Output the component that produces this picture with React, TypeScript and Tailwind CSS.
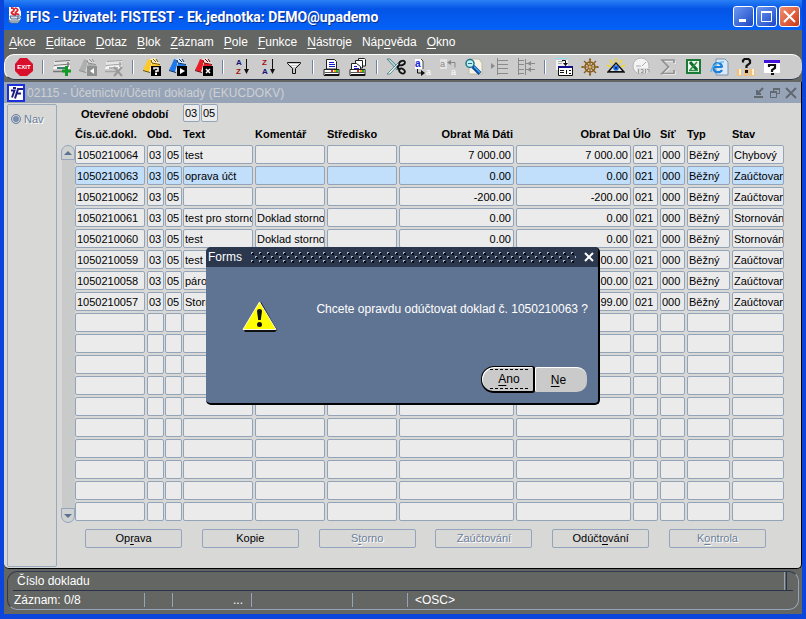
import type { ReactNode } from "react";

type IconProps = { children: ReactNode };

function Glyph({ children }: IconProps) {
  return (
    <svg width="20" height="20" viewBox="0 0 20 20" aria-hidden="true">
      {children}
    </svg>
  );
}

function RowShape({ top, mid }: { top: string; mid: string }) {
  return (
    <>
      <path d="M3 4h15v4H2V5z" fill="#e6e6e4" />
      <path d="M3 4.5L18 3.5M2 8.5L18 7" stroke={top} strokeWidth="1" fill="none" />
      <path d="M1 11l2-2 15-1v4H1z" fill="#f4f4f4" />
      <path d="M5 11h9" stroke={mid} strokeWidth="2" />
      <path d="M1 14.5h12M16 5v5" stroke={top} strokeWidth="1.5" fill="none" />
    </>
  );
}

function Folder({ fill, dark, page }: { fill: string; dark: string; page: string }) {
  return (
    <>
      <path d="M8 2l5-1 3 4 2 1-2 5-9 4-2-2z" fill={page} />
      <path d="M6 2l3 1v5l-2 7-6-2 3-6z" fill={fill} />
      <path d="M10 6l8 2-1 2H9z" fill={fill} />
      <path d="M1 13.5l7 2M9 3l1 3 8 1.500" stroke={dark} fill="none" />
      <path d="M11 2l3 3M14 2l2 3" stroke={dark} fill="none" />
    </>
  );
}

function Badge({ fill, children }: { fill: string; children: ReactNode }) {
  return (
    <>
      <rect x="9" y="9" width="10" height="10" fill={fill} />
      {children}
    </>
  );
}

function Printer() {
  return (
    <>
      <path d="M2 12.5h15v6H2z" fill="#fff" stroke="#222" />
      <path d="M2.500 15.500h14" stroke="#555" />
      <path d="M3 18h14" stroke="#111" strokeWidth="2" />
      <path d="M9 14h2" stroke="#e22" strokeWidth="2" />
      <path d="M12 14h2" stroke="#ea0" strokeWidth="2" />
      <path d="M14 14h2" stroke="#2b2" strokeWidth="2" />
    </>
  );
}

function SortIcon({ a, b, ca, cb }: { a: string; b: string; ca: string; cb: string }) {
  return (
    <Glyph>
      <text x="4" y="8" fontSize="8" fontWeight="bold" fontFamily="'Liberation Sans', sans-serif" fill={ca}>{a}</text>
      <text x="4" y="17" fontSize="8" fontWeight="bold" fontFamily="'Liberation Sans', sans-serif" fill={cb}>{b}</text>
      <path d="M14.500 2v12" stroke="#111" />
      <path d="M12 12h5l-2.500 5z" fill="#111" />
    </Glyph>
  );
}

type Tool = { name: string; icon: ReactNode };

const toolGroups: Tool[][] = [
  [
    {
      name: "Konec",
      icon: (
        <Glyph>
          <path d="M6 1h7l6 6v7l-6 5H6l-5-5V7z" fill="#d8102c" />
          <text x="10" y="12" textAnchor="middle" fontSize="6" fontWeight="bold" fontFamily="'Liberation Sans', sans-serif" fill="#fff">EXIT</text>
        </Glyph>
      ),
    },
  ],
  [
    {
      name: "Nový záznam",
      icon: (
        <Glyph>
          <RowShape top="#777" mid="#3f7f73" />
          <path d="M14.500 9v10M10 14h9" stroke="#139a22" strokeWidth="3" />
        </Glyph>
      ),
    },
    {
      name: "Kopírovat záznam",
      icon: (
        <Glyph>
          <Folder fill="#aeb0b0" dark="#8c8c8c" page="#d8d8d8" />
          <Badge fill="#8f9191"><path d="M16 11v6l-4-3z" fill="#fff" /></Badge>
        </Glyph>
      ),
    },
    {
      name: "Smazat záznam",
      icon: (
        <Glyph>
          <RowShape top="#a5a5a5" mid="#b4b4b4" />
          <path d="M10 10l8 9M18 10l-8 9" stroke="#999" strokeWidth="2" />
        </Glyph>
      ),
    },
  ],
  [
    {
      name: "Zadat dotaz",
      icon: (
        <Glyph>
          <Folder fill="#ffc928" dark="#6b5310" page="#fff3c0" />
          <Badge fill="#000">
            <path d="M12 12.500V11h4v3h-2v1.500" stroke="#fff" strokeWidth="1.500" fill="none" />
            <rect x="13" y="16" width="2" height="2" fill="#fff" />
          </Badge>
        </Glyph>
      ),
    },
    {
      name: "Provést dotaz",
      icon: (
        <Glyph>
          <Folder fill="#1f78e8" dark="#0c2f66" page="#dceaff" />
          <Badge fill="#000"><path d="M12 11v6l5-3z" fill="#fff" /></Badge>
        </Glyph>
      ),
    },
    {
      name: "Zrušit dotaz",
      icon: (
        <Glyph>
          <Folder fill="#e81c24" dark="#6a0d10" page="#ffe2e0" />
          <Badge fill="#000"><path d="M12 12l4 4M16 12l-4 4" stroke="#fff" strokeWidth="1.500" /></Badge>
        </Glyph>
      ),
    },
  ],
  [
    { name: "Seřadit vzestupně", icon: <SortIcon a="A" b="Z" ca="#14147a" cb="#a01010" /> },
    { name: "Seřadit sestupně", icon: <SortIcon a="Z" b="A" ca="#a01010" cb="#14147a" /> },
    {
      name: "Filtr",
      icon: (
        <Glyph>
          <path d="M3.500 5.500h13v1l-5 5v5h-3v-5l-5-5z" fill="#c9c9c9" stroke="#111" />
          <path d="M5 7.500h9M8 9.500h4" stroke="#fff" />
        </Glyph>
      ),
    },
  ],
  [
    {
      name: "Tisk",
      icon: (
        <Glyph>
          <path d="M4.500 12V2.500h8l2 2V12z" fill="#fff" stroke="#222" />
          <path d="M7 5.500h5M7 7.500h6M7 9.500h6" stroke="#1818c8" />
          <Printer />
        </Glyph>
      ),
    },
    {
      name: "Tisk sestavy",
      icon: (
        <Glyph>
          <path d="M10.500 9V1.500h6l1 1V9z" fill="#fff" stroke="#222" />
          <path d="M7.500 11V3.500h7V11z" fill="#fff" stroke="#222" />
          <path d="M3.500 13V6.500h5l4 3V13z" fill="#fff" stroke="#222" />
          <path d="M6 9.500h3M6 11.500h5" stroke="#1818c8" />
          <Printer />
        </Glyph>
      ),
    },
  ],
  [
    {
      name: "Vyjmout",
      icon: (
        <Glyph>
          <path d="M1 2h3l9 9-2 2z" fill="#a8d4d8" stroke="#4b777b" strokeWidth=".8" />
          <path d="M1 17h3L15 5l-1-1z" fill="#e2f6f8" stroke="#4b777b" strokeWidth=".8" />
          <path d="M11 10l3-2M11 10l3 3" stroke="#111" strokeWidth="2" />
          <ellipse cx="16" cy="6" rx="3" ry="2" transform="rotate(-25 16 6)" fill="none" stroke="#111" strokeWidth="1.800" />
          <ellipse cx="16" cy="14" rx="3" ry="2.200" transform="rotate(35 16 14)" fill="none" stroke="#111" strokeWidth="1.800" />
        </Glyph>
      ),
    },
    {
      name: "Kopírovat",
      icon: (
        <Glyph>
          <path d="M3 2h6l2 2v8H3z" fill="#fff" />
          <path d="M9 2l2 2v8" stroke="#444" fill="none" />
          <text x="3" y="10" fontSize="10" fontWeight="bold" fontFamily="'Liberation Sans', sans-serif" fill="#1c1cd6">a</text>
          <path d="M5.500 12v4h5" stroke="#111" fill="none" />
          <path d="M9 13l4 3-4 3z" fill="#111" />
          <text x="14" y="18" fontSize="9" fontFamily="'Liberation Sans', sans-serif" fill="#fff">a</text>
        </Glyph>
      ),
    },
    {
      name: "Vložit",
      icon: (
        <Glyph>
          <path d="M2 2h7v10H2z" fill="#e3e3e3" />
          <text x="2" y="10" fontSize="9" fontFamily="'Liberation Sans', sans-serif" fill="#888">a</text>
          <path d="M11 5.500h6v5" stroke="#888" fill="none" />
          <path d="M13 3v5l-4-2.500z" fill="#888" />
          <text x="13" y="18" fontSize="9" fontFamily="'Liberation Sans', sans-serif" fill="#fff">a</text>
        </Glyph>
      ),
    },
    {
      name: "Hledat",
      icon: (
        <Glyph>
          <path d="M5 2h10l3 4v11H5z" fill="#f7f4e6" stroke="#b5b2a0" strokeWidth=".8" />
          <circle cx="6" cy="6.500" r="4" fill="#bdf2f2" stroke="#237088" strokeWidth="1.500" />
          <path d="M4 6.500h4" stroke="#237088" />
          <path d="M9 9.500l7 7" stroke="#0d4f9a" strokeWidth="4" />
          <path d="M10 9.500l6 6" stroke="#48a4f0" strokeWidth="1.500" />
        </Glyph>
      ),
    },
    {
      name: "Rozbalit",
      icon: (
        <Glyph>
          <path d="M1 6l4 3-4 3z" fill="#8a8a8a" />
          <path d="M7.500 1v17M8 3.500h10M8 7.500h10M8 11.500h10M8 16.500h10" stroke="#8a8a8a" fill="none" />
        </Glyph>
      ),
    },
    {
      name: "Sbalit",
      icon: (
        <Glyph>
          <path d="M2.500 1v17M9.500 2v16M3 3.500h5M3 7.500h5M3 12.500h5M3 16.500h5M10 6.500h9M10 12.500h9" stroke="#8a8a8a" fill="none" />
          <path d="M15 4l-4 2.500L15 9zM15 10l-4 2.500 4 2.500z" fill="#8a8a8a" />
        </Glyph>
      ),
    },
  ],
  [
    {
      name: "Seznam hodnot",
      icon: (
        <Glyph>
          <path d="M2 3h12v10H2z" fill="#f3f3f3" />
          <path d="M1 1.500h13" stroke="#88dff2" />
          <path d="M4 4.500h5M4 6.500h4" stroke="#aaa" />
          <path d="M4.500 9.500h14v9h-14z" fill="#fff" stroke="#111" />
          <path d="M4 10h15" stroke="#10108a" strokeWidth="2" />
          <path d="M6 13.500h4M6 15.500h4M12.500 13v4M15 13.500h2M15 16.500h2" stroke="#111" fill="none" />
          <path d="M8 3.500h3.500v5" stroke="#111" fill="none" />
          <path d="M9 6h5l-2.500 3z" fill="#111" />
        </Glyph>
      ),
    },
    {
      name: "Navigátor",
      icon: (
        <Glyph>
          <g stroke="#8a5a12" fill="none">
            <circle cx="10" cy="10" r="5" strokeWidth="1.500" />
            <path d="M10 2v16M2 10h16M4 4l12 12M16 4L4 16" strokeWidth="1.200" />
            <path d="M9 2.500h2M9 17.500h2M2.500 9v2M17.500 9v2" strokeWidth="2" />
          </g>
          <circle cx="10" cy="10" r="1.500" fill="#d7b06b" />
        </Glyph>
      ),
    },
    {
      name: "Zobrazit",
      icon: (
        <Glyph>
          <path d="M4 3l3 4M16 3l-3 4M10 1v4M1 8l4 2M19 8l-4 2" stroke="#efd925" strokeWidth="1.500" />
          <path d="M10 5l9 10H1z" fill="#111" />
          <path d="M10 7l6 7H4z" fill="#e8e8e8" />
          <circle cx="10" cy="11" r="2.800" fill="#186de8" />
          <circle cx="10" cy="11" r="1" fill="#031a50" />
          <path d="M1 15.500h18" stroke="#444" />
        </Glyph>
      ),
    },
    {
      name: "Historie",
      icon: (
        <Glyph>
          <circle cx="9" cy="9" r="8" fill="#f4f4f4" stroke="#b5b5b5" />
          <path d="M10 9l4-4M4 9h5" stroke="#aaa" />
          <rect x="5" y="11" width="12" height="5" fill="#ddd" />
          <path d="M6.500 12v4M9 12.500h2v3H9M13.500 12v4M15 12.500h2v3" stroke="#999" fill="none" />
        </Glyph>
      ),
    },
    {
      name: "Součet",
      icon: (
        <Glyph>
          <path d="M17 7V4H5l6.500 7L5 17.500h12V14" stroke="#fff" fill="none" />
          <path d="M16 6V3H4l6.500 7L4 16.500h12V13" stroke="#919191" strokeWidth="1.700" fill="none" />
        </Glyph>
      ),
    },
    {
      name: "Export do Excelu",
      icon: (
        <Glyph>
          <rect x="2" y="2" width="15" height="15" fill="#1b7a35" />
          <rect x="4" y="4" width="11" height="11" fill="#eef7ee" />
          <path d="M6 5l7 8" stroke="#116b2a" strokeWidth="3" />
          <path d="M13 5l-7 8M5 13.500h9" stroke="#2c9146" strokeWidth="1.500" />
        </Glyph>
      ),
    },
    {
      name: "Internet",
      icon: (
        <Glyph>
          <path d="M6 2h9l3 3v13H6z" fill="#dbe8f5" stroke="#7893b3" />
          <path d="M12 10H4M12 10.500c0-6-8.500-6-8.500 0s7 5.500 8.500 2.500" stroke="#1a7fd6" strokeWidth="2.200" fill="none" />
          <path d="M1 15c0-5 7-11 13-10" stroke="#55b2ee" strokeWidth="1.200" fill="none" />
        </Glyph>
      ),
    },
    {
      name: "Kontextová nápověda",
      icon: (
        <Glyph>
          <path d="M1 12h5v7H1zM8 12h5v7H8zM14 12h5v7h-5z" fill="#f3c07c" />
          <path d="M3 12h2v6H3zM16 12h2v6h-2z" fill="#fdf0d8" />
          <path d="M7 5.500V3.500L8.500 2h4L14 3.500V6l-3.500 3v2" stroke="#111" strokeWidth="2.200" fill="none" />
          <rect x="9" y="13" width="3" height="3" fill="#111" />
        </Glyph>
      ),
    },
    {
      name: "Nápověda",
      icon: (
        <Glyph>
          <rect x="2" y="3" width="16" height="13" fill="#fff" />
          <rect x="2" y="3" width="16" height="3" fill="#4412d8" />
          <path d="M7 10V8h6v3l-3 2v2" stroke="#111" strokeWidth="2.200" fill="none" />
          <rect x="9" y="16" width="3" height="2" fill="#111" />
        </Glyph>
      ),
    },
  ],
];

// Each label is split as [before, mnemonic, after].
type Label = [string, string, string];

const menus: Label[] = [
  ["", "A", "kce"],
  ["", "E", "ditace"],
  ["", "D", "otaz"],
  ["", "B", "lok"],
  ["", "Z", "áznam"],
  ["", "P", "ole"],
  ["", "F", "unkce"],
  ["", "N", "ástroje"],
  ["Náp", "o", "věda"],
  ["", "O", "kno"],
];

function Mnemonic({ label }: { label: Label }) {
  return (
    <>
      {label[0]}
      <span className="underline underline-offset-2">{label[1]}</span>
      {label[2]}
    </>
  );
}

type Column = { title: string; width: string; right?: boolean; tight?: boolean };

const columns: Column[] = [
  { title: "Čís.úč.dokl.", width: "w-[72px]" },
  { title: "Obd.", width: "w-[18px]", tight: true },
  { title: "", width: "w-[18px]", tight: true },
  { title: "Text", width: "w-[72px]" },
  { title: "Komentář", width: "w-[72px]" },
  { title: "Středisko", width: "w-[72px]" },
  { title: "Obrat Má Dáti", width: "", right: true },
  { title: "Obrat Dal", width: "", right: true },
  { title: "Úlo", width: "w-[27px]" },
  { title: "Síť", width: "w-[27px]" },
  { title: "Typ", width: "w-[45px]" },
  { title: "Stav", width: "w-[54px]" },
];

const records: string[][] = [
  ["1050210064", "03", "05", "test", "", "", "7 000.00", "7 000.00", "021", "000", "Běžný", "Chybový"],
  ["1050210063", "03", "05", "oprava účt", "", "", "0.00", "0.00", "021", "000", "Běžný", "Zaúčtovaný"],
  ["1050210062", "03", "05", "", "", "", "-200.00", "-200.00", "021", "000", "Běžný", "Zaúčtovaný"],
  ["1050210061", "03", "05", "test pro storno", "Doklad storno", "", "0.00", "0.00", "021", "000", "Běžný", "Stornováno"],
  ["1050210060", "03", "05", "test", "Doklad storno", "", "0.00", "0.00", "021", "000", "Běžný", "Stornováno"],
  ["1050210059", "03", "05", "test", "", "", "100.00", "100.00", "021", "000", "Běžný", "Zaúčtovaný"],
  ["1050210058", "03", "05", "párování", "", "", "100.00", "100.00", "021", "000", "Běžný", "Zaúčtovaný"],
  ["1050210057", "03", "05", "Storno", "", "", "199.00", "199.00", "021", "000", "Běžný", "Zaúčtovaný"],
];

const rows: string[][] = [...records, ...Array.from({ length: 10 }, () => Array<string>(12).fill(""))];
const currentRow = 1;

type Action = { label: Label; disabled?: boolean };

const actions: Action[] = [
  { label: ["Op", "r", "ava"] },
  { label: ["Kopie", "", ""] },
  { label: ["S", "t", "orno"], disabled: true },
  { label: ["Zaúčtování", "", ""], disabled: true },
  { label: ["Odúčt", "o", "vání"] },
  { label: ["K", "o", "ntrola"], disabled: true },
];

function TitleBar() {
  const box = "flex size-[21px] items-center justify-center rounded-[3px] border border-white";
  return (
    <header className="flex h-[30px] shrink-0 items-center gap-[3px] bg-linear-to-b from-[#2a80f5] via-[#0454e6] via-30% to-[#0562f8] pr-[2px] pl-[3px]">
      <svg width="16" height="18" viewBox="0 0 16 18" aria-hidden="true">
        <path d="M2 1h10l2 5v6l-3 5H4l-2-4z" fill="#fff" />
        <path d="M4 2c5 0 3 3 1 4s2 3 4 3M8 2c4 1 3 3 1 4s2 3 3 2" stroke="#e0202a" strokeWidth="1.800" fill="none" />
        <path d="M3 10h8v3H4zM11 10c4-1 3 3-1 3M1 15h12l-2 2H4z" stroke="#4f6888" fill="#d5dfec" />
      </svg>
      <h1 className="min-w-0 flex-1 truncate pt-1 font-[Roboto,sans-serif] text-[14px] font-bold text-white [text-shadow:1px_1px_0_#0b2f8c]">
        iFIS - Uživatel: FISTEST - Ek.jednotka: DEMO@upademo
      </h1>
      <div className="mt-[3px] flex gap-[2px]">
        <button type="button" aria-label="Minimalizovat" className={`${box} bg-linear-to-br from-[#6e97f2] to-[#1c46c4]`}>
          <svg width="15" height="15" viewBox="0 0 15 15"><rect x="3" y="10" width="7" height="3" fill="#fff" /></svg>
        </button>
        <button type="button" aria-label="Maximalizovat" className={`${box} bg-linear-to-br from-[#6e97f2] to-[#1c46c4]`}>
          <svg width="15" height="15" viewBox="0 0 15 15"><path d="M2.500 2.500h10v10h-10zM2 3.500h11" stroke="#fff" fill="none" /><path d="M2 3h11" stroke="#fff" strokeWidth="2" /></svg>
        </button>
        <button type="button" aria-label="Zavřít" className={`${box} bg-linear-to-br from-[#f09070] to-[#cc3310]`}>
          <svg width="15" height="15" viewBox="0 0 15 15"><path d="M2 2l11 11M13 2L2 13" stroke="#fff" strokeWidth="2" /></svg>
        </button>
      </div>
    </header>
  );
}

function Toolbar() {
  return (
    <div role="toolbar" aria-label="Nástroje" className="flex h-[26px] shrink-0 items-center rounded-[10px] border-t border-b border-l border-t-white border-b-[#2a3347] border-l-white bg-[#cbcccb] pl-[6px]">
      {toolGroups.map((group, i) => (
        <div key={i} className="flex items-center">
          {i > 0 && (
            <span className="flex w-3 justify-center">
              <span className="h-[14px] w-[2px] border-r border-l border-r-white border-l-[#6d82a3]" />
            </span>
          )}
          {group.map((tool) => (
            <button key={tool.name} type="button" aria-label={tool.name} className="flex w-[26px] justify-center">
              {tool.icon}
            </button>
          ))}
        </div>
      ))}
    </div>
  );
}

function DocumentBar() {
  return (
    <div className="flex h-[21px] shrink-0 items-center gap-[2px] bg-[#97a4b8] pr-1 pl-[3px]">
      <svg width="18" height="18" viewBox="0 0 18 18" aria-hidden="true">
        <rect x="1" y="1" width="16" height="16" fill="#fff" stroke="#1c30d8" strokeWidth="2" />
        <path d="M4 6.500h3.500L5 13.500" stroke="#1c1c84" strokeWidth="2" fill="none" />
        <path d="M8 14.500l3-9.500h5M10 9.500h4" stroke="#1c1c84" strokeWidth="2" fill="none" />
        <rect x="6" y="3" width="3" height="2" fill="#1c1c84" />
      </svg>
      <h2 className="flex-1 text-xs text-[#cdd0d3]">02115 - Účetnictví/Účetní doklady (EKUCDOKV)</h2>
      <div className="flex gap-1 text-[#606870]">
        <button type="button" aria-label="Minimalizovat formulář">
          <svg width="12" height="12" viewBox="0 0 12 12" stroke="currentColor" fill="none"><path d="M10 1L5 6" strokeWidth="2" /><path d="M4 3v4h4M1 10h9" strokeWidth="2" /></svg>
        </button>
        <button type="button" aria-label="Obnovit formulář">
          <svg width="12" height="12" viewBox="0 0 12 12" stroke="currentColor" fill="none"><path d="M4.500 4V1.500h6v5H8M1.500 4.500h6v6h-6z" /><path d="M4 2h7M1 5h7" strokeWidth="2" /></svg>
        </button>
        <button type="button" aria-label="Zavřít formulář">
          <svg width="12" height="12" viewBox="0 0 12 12" stroke="currentColor"><path d="M1 1l10 10M11 1L1 11" strokeWidth="2" /></svg>
        </button>
      </div>
    </div>
  );
}

function ScrollRail() {
  return (
    <div className="mt-[18px] flex w-[14px] shrink-0 flex-col">
      <button type="button" aria-label="Posunout nahoru" className="flex h-[15px] items-center justify-center rounded-t-[7px] border border-[#93a4bc] bg-[#d0d1d1]">
        <span className="border-x-4 border-b-4 border-x-transparent border-b-[#5b7391]" />
      </button>
      <div className="ml-px flex-1 bg-[#c9caca]" />
      <button type="button" aria-label="Posunout dolů" className="flex h-[15px] items-center justify-center rounded-b-[7px] border border-[#93a4bc] bg-[#d0d1d1]">
        <span className="border-x-4 border-t-4 border-x-transparent border-t-[#5b7391]" />
      </button>
    </div>
  );
}

function RecordTable() {
  return (
    <table className="w-full table-fixed border-collapse">
      <colgroup>
        {columns.map((col, i) => (
          <col key={i} className={col.width} />
        ))}
      </colgroup>
      <thead>
        <tr className="h-[18px]">
          {columns.map((col, i) =>
            i === 2 ? null : (
              <th
                key={i}
                colSpan={i === 1 ? 2 : 1}
                className={`p-0 align-top leading-[15px] font-bold whitespace-nowrap ${col.right ? "pr-[3px] text-right" : "text-left"}`}
              >
                {col.title}
              </th>
            ),
          )}
        </tr>
      </thead>
      <tbody>
        {rows.map((row, r) => (
          <tr key={r} className="h-[21px]">
            {row.map((value, c) => (
              <td key={c} className={`p-0 align-top ${columns[c].tight ? "pr-px" : "pr-[2px]"}`}>
                <input
                  type="text"
                  defaultValue={value}
                  aria-label={`${columns[c].title || "Rok"} ${r + 1}`}
                  className={`block h-[19px] w-full rounded-[2px] border border-[#93a4b8] ${
                    columns[c].right ? "pr-[2px] text-right" : "pl-px"
                  } ${r === currentRow ? "bg-[#c1defa]" : "bg-[#ebebec]"}`}
                />
              </td>
            ))}
          </tr>
        ))}
      </tbody>
    </table>
  );
}

function StatusBar() {
  return (
    <footer className="mx-[3px] mt-[2px] mb-[4px] rounded-[10px] border border-t-[#2f3a50] border-r-[#97a4b8] border-b-[#97a4b8] border-l-[#2f3a50] text-xs text-white">
      <div className="mx-[5px] flex h-[19px] items-center border-b border-[#2a3347]">
        <p className="flex-1 pl-1">Číslo dokladu</p>
        <span className="mr-[6px] h-[18px] w-[3px] border-r border-l border-r-[#2a3347] border-l-[#97a4b8]" />
      </div>
      <div className="mx-[6px] flex h-[18px] items-center *:h-[14px] *:leading-[14px]">
        <p className="w-[131px] border-r border-[#97a4b8]">Záznam: 0/8</p>
        <p className="w-[28px] border-r border-[#97a4b8]" />
        <p className="w-[79px] border-r border-[#97a4b8] pr-2 text-right">...</p>
        <p className="w-[101px] border-r border-[#97a4b8]" />
        <p className="w-[55px] border-r border-[#97a4b8]" />
        <p className="pl-[7px]">&lt;OSC&gt;</p>
      </div>
    </footer>
  );
}

function ConfirmDialog() {
  return (
    <div role="alertdialog" aria-labelledby="dlg-title" aria-describedby="dlg-text" className="absolute top-[247px] left-1/2 w-[394px] -translate-x-1/2 overflow-hidden rounded-[5px] border-r-2 border-b-2 border-black bg-[#5f7492] text-xs text-white">
      <div className="flex h-[20px] items-center gap-2 bg-[#2b374c] pr-1 pl-[2px]">
        <h3 id="dlg-title" className="text-xs">Forms</h3>
        <svg className="h-[12px] min-w-0 flex-1" aria-hidden="true">
          <defs>
            <pattern id="grip" width="8" height="8" patternUnits="userSpaceOnUse">
              <path d="M2 2h2v2H2zM6 6h2v2H6z" fill="#05080e" />
              <path d="M1 1h2v1H1zM1 2h1v1H1zM5 5h2v1H5zM5 6h1v1H5z" fill="#a5b5cc" />
            </pattern>
          </defs>
          <rect width="100%" height="12" fill="url(#grip)" />
        </svg>
        <button type="button" aria-label="Zavřít dialog">
          <svg width="10" height="10" viewBox="0 0 10 10"><path d="M1 1l8 8M9 1L1 9" stroke="#fff" strokeWidth="2" /></svg>
        </button>
      </div>
      <div className="flex items-start justify-between pt-[34px] pr-[10px] pl-[36px]">
        <svg width="36" height="32" viewBox="0 0 36 32" aria-hidden="true">
          <path d="M19 1l16 28-2 2H3l-1-2z" fill="#111" />
          <path d="M17.500 1L34 28.500H1z" fill="#ff0" stroke="#fffde0" strokeWidth="1" />
          <path d="M15 10q0-2 2.500-2T20 10l-1.200 9h-2.600z" fill="#111" />
          <circle cx="17.500" cy="23.500" r="2.500" fill="#111" />
        </svg>
        <p id="dlg-text" className="leading-4">Chcete opravdu odúčtovat doklad č. 1050210063 ?</p>
      </div>
      <div className="mt-[33px] mr-[11px] mb-[10px] flex items-center justify-end text-black">
        <button type="button" className="h-[27px] w-[54px] rounded-l-[13px] rounded-r-[3px] border border-r-2 border-b-2 border-black bg-[#c9cac9] pr-[5px] pl-[8px] shadow-[inset_1px_1px_0_#fff]">
          <span className="block border-y border-dashed border-black leading-[18px]">
            <Mnemonic label={["", "A", "no"]} />
          </span>
        </button>
        <button type="button" className="h-[25px] w-[52px] rounded-l-[2px] rounded-r-[10px] border-t border-l border-white bg-[#c9cac9] pr-[6px]">
          <Mnemonic label={["", "N", "e"]} />
        </button>
      </div>
    </div>
  );
}

export default function App() {
  return (
    <div className="relative flex min-h-screen flex-col overflow-hidden border-x-4 border-b-[5px] border-[#0b45dc] bg-[#646663] font-['Liberation_Sans',Arial,sans-serif] text-[11px] text-black">
      <TitleBar />
      <nav className="flex h-6 shrink-0 items-center gap-[10px] pl-[5px] text-xs text-white" aria-label="Hlavní nabídka">
        {menus.map((label) => (
          <button key={label.join("")} type="button">
            <Mnemonic label={label} />
          </button>
        ))}
      </nav>
      <Toolbar />
      <div className="mt-[2px] flex flex-1 flex-col rounded-b-[5px] border-r border-b border-black bg-[#d8d8d7]">
        <DocumentBar />
        <main className="flex flex-1">
          <aside className="mt-px mb-px ml-[3px] w-[50px] shrink-0 rounded-[2px] border border-[#9aa8bd]">
            <label className="flex items-center gap-[3px] pt-[6px] pl-[3px] text-[#6b7f9a] [text-shadow:1px_1px_0_#fff]">
              <input type="radio" name="nav" className="size-[10px] appearance-none rounded-full border border-[#7387a3] bg-[#7a8dab] shadow-[inset_0_0_0_1px_#ccd2dc]" />
              Nav
            </label>
          </aside>
          <section className="flex min-w-0 flex-1 flex-col pr-[15px] pl-1">
            <div className="flex h-[24px] items-start pt-px pl-5">
              <label htmlFor="period-month" className="w-[102px] leading-[20px] font-bold">Otevřené období</label>
              <div className="flex gap-px">
                <input id="period-month" defaultValue="03" className="h-[18px] w-[17px] rounded-[2px] border border-[#93a4b8] bg-[#ebebec] pl-px" />
                <input aria-label="Rok období" defaultValue="05" className="h-[18px] w-[17px] rounded-[2px] border border-[#93a4b8] bg-[#ebebec] pl-px" />
              </div>
            </div>
            <div className="flex">
              <ScrollRail />
              <RecordTable />
            </div>
            <div className="mt-[6px] flex justify-between pr-[20px] pl-6">
              {actions.map(({ label, disabled }) => (
                <button
                  key={label.join("")}
                  type="button"
                  disabled={disabled}
                  className={`h-[19px] w-[97px] rounded-[2px] border border-[#93a4bc] leading-[17px] ${
                    disabled ? "text-[#6b7f9a] [text-shadow:1px_1px_0_#fff]" : "text-black"
                  }`}
                >
                  <Mnemonic label={label} />
                </button>
              ))}
            </div>
          </section>
        </main>
      </div>
      <StatusBar />
      <ConfirmDialog />
    </div>
  );
}
